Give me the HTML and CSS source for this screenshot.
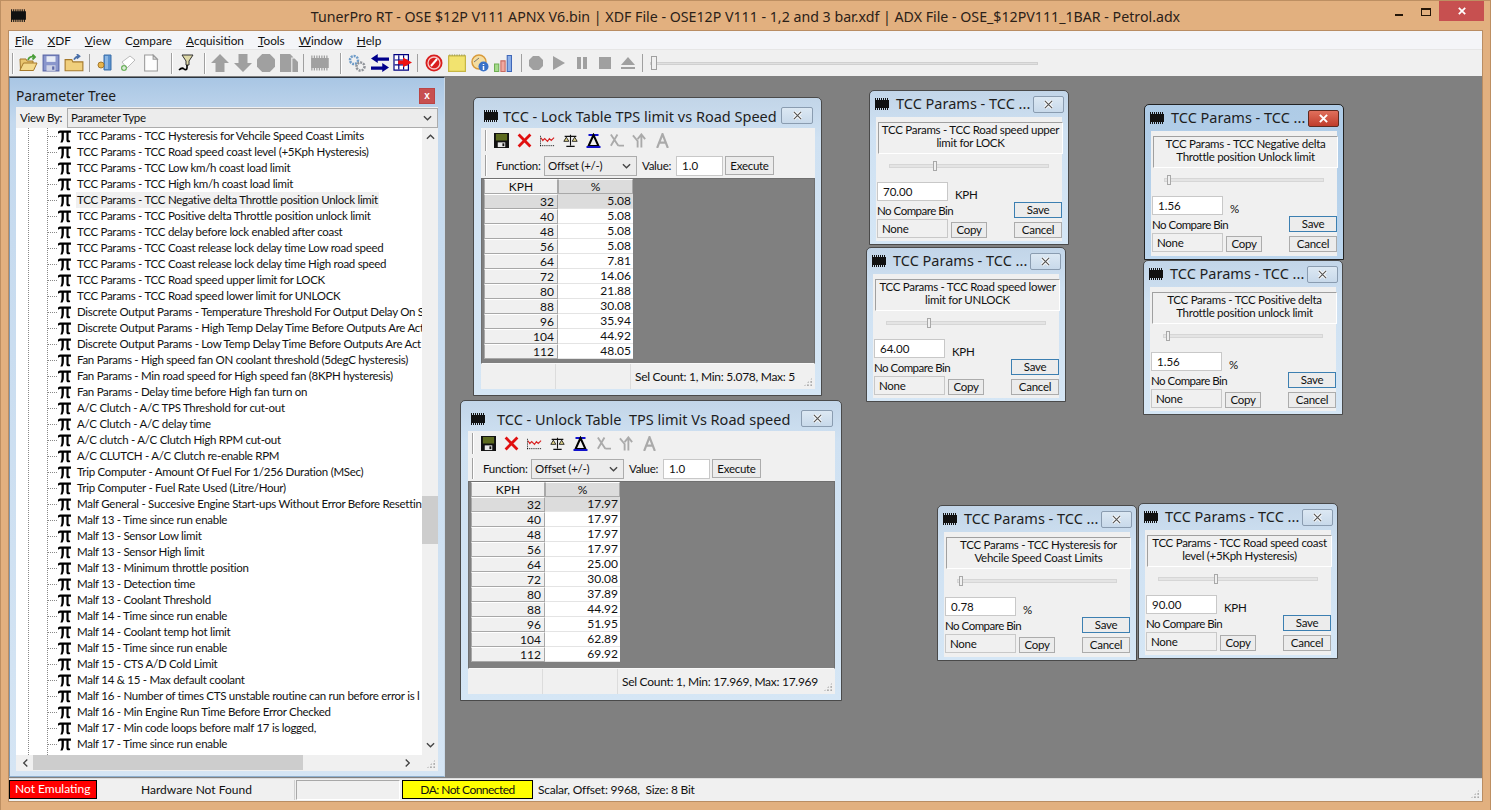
FILE: index.html
```html
<!DOCTYPE html>
<html lang="en">
<head>
<meta charset="utf-8">
<title>TunerPro RT</title>
<link rel="stylesheet" href="styles.css">
</head>
<body>
<svg class="sprite" width="0" height="0" aria-hidden="true">
  <symbol id="chip" viewBox="0 0 16 12"><path fill="#111" d="M1 2h14v8H1z"/><path stroke="#111" stroke-width="1" d="M1.500 0v12M3.500 0v12M5.500 0v12M7.500 0v12M9.500 0v12M11.500 0v12M13.500 0v12"/></symbol>
  <symbol id="chipg" viewBox="0 0 16 12"><path fill="#a0a0a0" d="M1 2h14v8H1z"/><path stroke="#a0a0a0" d="M1.500 0v12M3.500 0v12M5.500 0v12M7.500 0v12M9.500 0v12M11.500 0v12M13.500 0v12"/></symbol>
  <symbol id="pi" viewBox="0 0 14 14"><path fill="#000" d="M0 1.500 2 .5h12v2.400h-2.600v7.400c0 .9.500 1.100 1.600.9v1.600c-1.500.7-3.900.6-3.900-1.600V2.900H6.300v5.300c0 2-.6 4-1.500 5.300H2.500c1-1.500 1.300-3.500 1.300-5.300V2.900H2.500c-.8 0-1.300.4-1.700 1H0z"/></symbol>
  <symbol id="open" viewBox="0 0 20 18"><path fill="#e9c56f" stroke="#a5792b" d="M2 5h6l1 2h6v3H6L2.500 16z"/><path fill="#f4d98c" stroke="#a5792b" d="M5.500 9H19l-3.500 7.500H1.800z"/><path fill="none" stroke="#4b9e3a" stroke-width="1.800" d="M10 6c1-3 3.500-4 6-3M14.500.5 17 3l-2.500 2.500"/></symbol>
  <symbol id="save" viewBox="0 0 16 16"><path fill="#8a96cc" stroke="#5c68a8" d="M1 1h14v14H1z"/><path fill="#e8ecf6" d="M4 2h8v5H4z"/><path fill="#cfd3e6" d="M4 10h8v5H4z"/><path fill="#5c68a8" d="M9 11h2v3H9z"/></symbol>
  <symbol id="saveb" viewBox="0 0 16 16"><path fill="#111" d="M0 0h16v16H0z"/><path fill="#5c6a1e" d="M2 1h12v7H2z"/><path fill="#e8e8e8" d="M4 10h8v5H4z"/><path fill="#111" d="M9 11h2v3H9z"/></symbol>
  <symbol id="folderup" viewBox="0 0 18 16"><path fill="#f0cf7c" stroke="#a5792b" d="M1 5h6l1 2h9v8H1z"/><path fill="none" stroke="#4a6fa8" stroke-width="1.500" d="M9 5c1-2 2.500-3 4-3M11.500 0 14 2l-2.500 2"/></symbol>
  <symbol id="door" viewBox="0 0 18 18"><path fill="#5c93d0" stroke="#3b6ea8" d="M8 1h7v15H8z"/><path fill="#8cb7e4" d="M9 2h3v13H9z"/><circle cx="5" cy="11" r="3" fill="#e8b54c" stroke="#a5792b"/></symbol>
  <symbol id="newfile" viewBox="0 0 18 18"><path fill="#fff" stroke="#bbb" d="m3 8 8-6 5 4-8 8z"/><circle cx="5" cy="14" r="3" fill="#6fb35f"/><path stroke="#fff" d="M3 14h4M5 12v4"/></symbol>
  <symbol id="doc" viewBox="0 0 14 17"><path fill="#fdfdfd" stroke="#9a9a9a" d="M1 1h8l4 4v11H1z"/><path fill="#ddd" stroke="#9a9a9a" d="M9 1v4h4z"/></symbol>
  <symbol id="funnel" viewBox="0 0 18 18"><path fill="#ded9a8" stroke="#333" d="M5 1h11l-4 6v4H9V7z"/><path fill="none" stroke="#000" stroke-width="1.600" d="M10 11v3c0 2-2 2-3 1s-3-1-5 1"/></symbol>
  <symbol id="up" viewBox="0 0 16 16"><path fill="#a0a0a0" d="M8 0l8 8h-4v8H4V8H0z"/></symbol>
  <symbol id="down" viewBox="0 0 16 16"><path fill="#a0a0a0" d="M8 16 0 8h4V0h8v8h4z"/></symbol>
  <symbol id="pages" viewBox="0 0 16 16"><path fill="#a0a0a0" d="M0 0h9l3 3h-2v13H0z"/><path fill="#a0a0a0" d="M11 4h2l3 3v9h-5z"/></symbol>
  <symbol id="gears" viewBox="0 0 18 18"><circle cx="6" cy="6" r="4" fill="none" stroke="#6d9bc8" stroke-width="2.500" stroke-dasharray="2 1"/><circle cx="12.500" cy="12.500" r="4" fill="none" stroke="#8e9298" stroke-width="2.500" stroke-dasharray="2 1"/></symbol>
  <symbol id="swap" viewBox="0 0 16 16"><path fill="#00008c" d="M6 0v3h10v3H6v2L0 4zM10 8v3H0v3h10v2l6-4z"/></symbol>
  <symbol id="flag" viewBox="0 0 16 15"><path fill="#fff" stroke="#000080" d="M.5.500h12v13H.5z"/><path stroke="#000080" d="M4.500 1v12M8.500 1v12M1 5h11M1 9h11"/><path fill="#ee1111" d="M15.500 7 8 3v2.500H4v3h4V11z"/></symbol>
  <symbol id="dial" viewBox="0 0 18 18"><circle cx="9" cy="9" r="8.500" fill="#d81e1e"/><circle cx="9" cy="9" r="6" fill="none" stroke="#f8c8c8" stroke-width="1.300"/><path stroke="#fff" stroke-width="2" d="M6 12l6-7"/></symbol>
  <symbol id="note" viewBox="0 0 15 15"><path fill="#f2e36f" stroke="#c6b644" d="M.5 1.500h14v13H.5z"/><path stroke="#9a9a50" stroke-dasharray="1 1" d="M1 1h13"/></symbol>
  <symbol id="info" viewBox="0 0 18 18"><circle cx="8" cy="8" r="7" fill="#f4dda0" stroke="#d89a3a" stroke-width="1.500"/><path stroke="#777" d="M3 8l5-4"/><circle cx="12.500" cy="12.500" r="5" fill="#3a72c8"/><path stroke="#fff" stroke-width="1.500" d="M12.500 10v1M12.500 12v4"/></symbol>
  <symbol id="bars" viewBox="0 0 17 17"><path fill="#a6dc8c" stroke="#6fae52" d="M.5 9.500h4v7h-4z"/><path fill="#f0a8a0" stroke="#c86a60" d="M6.500 6.500h4v10h-4z"/><path fill="#8cb0e8" stroke="#3f67b8" d="M12.500 1.500h4v15h-4z"/></symbol>
  <symbol id="hex" viewBox="0 0 14 14"><path fill="#a0a0a0" d="M4 0h6l4 4v6l-4 4H4l-4-4V4z"/></symbol>
  <symbol id="play" viewBox="0 0 14 14"><path fill="#a0a0a0" d="M1 0l12 7-12 7z"/></symbol>
  <symbol id="pause" viewBox="0 0 14 14"><path fill="#a0a0a0" d="M2 1h4v12H2zM8 1h4v12H8z"/></symbol>
  <symbol id="stop" viewBox="0 0 14 14"><path fill="#a0a0a0" d="M1 1h12v12H1z"/></symbol>
  <symbol id="eject" viewBox="0 0 14 14"><path fill="#a0a0a0" d="M7 1l7 8H0zM0 11h14v2H0z"/></symbol>
  <symbol id="xred" viewBox="0 0 14 14"><path stroke="#e01010" stroke-width="2.600" d="M1.500 1.500l11 11M12.500 1.500l-11 11"/></symbol>
  <symbol id="wave" viewBox="0 0 16 14"><path fill="none" stroke="#d82020" stroke-width="1.200" d="M1 4l2 3 2-2 3 3 2-3 2 2 3-3"/><path stroke="#000" stroke-dasharray="1 1" d="M0 12.500h16M.5 2v11"/></symbol>
  <symbol id="scale" viewBox="0 0 18 16"><path stroke="#111" stroke-width="1.300" d="M9 1v13M2 3h14M4 15h10"/><path fill="#e6d98a" stroke="#111" d="M4 4 1 9h6zM14 4l-3 5h6z"/></symbol>
  <symbol id="tri" viewBox="0 0 14 15"><path stroke="#1111cc" stroke-width="2" d="M2 2h10"/><path fill="none" stroke="#000" stroke-width="2" d="M7 2 2 13h10z"/><path stroke="#1111cc" stroke-width="2" d="M0 14h14"/></symbol>
  <symbol id="xg" viewBox="0 0 16 15"><path fill="none" stroke="#aaa" stroke-width="2" d="M2 1l8 12M9 1 2 13M10 13h6"/></symbol>
  <symbol id="yg" viewBox="0 0 16 15"><path fill="none" stroke="#aaa" stroke-width="2" d="M1 2l5 6v7M10 15V2M6 6l4-5 4 5"/></symbol>
  <symbol id="ag" viewBox="0 0 12 14"><path fill="none" stroke="#aaa" stroke-width="2" d="M1 14 6 1l5 13M3 9h6"/></symbol>
  <symbol id="xwin" viewBox="0 0 12 10"><path stroke="#fff" stroke-width="3.200" d="M2 1l8 8M10 1 2 9"/><path stroke="#555" stroke-width="1.300" d="M2 1l8 8M10 1 2 9"/></symbol>
  <symbol id="xwhite" viewBox="0 0 12 10"><path stroke="#fff" stroke-width="2.200" d="M2 1l8 8M10 1 2 9"/></symbol>
  <symbol id="chev" viewBox="0 0 10 6"><path fill="none" stroke="#444" stroke-width="1.500" d="M1 1l4 4 4-4"/></symbol>
</svg>

<div class="app">
  <header class="titlebar">
    <svg class="tb-chip"><use href="#chip"/></svg>
    <div class="app-title">TunerPro RT - OSE $12P V111 APNX V6.bin | XDF File - OSE12P V111 - 1,2 and 3 bar.xdf | ADX File - OSE_$12PV111_1BAR - Petrol.adx</div>
    <div class="caps"><span class="cap-min"></span><span class="cap-max"></span><span class="cap-close"><svg class="ic-x"><use href="#xwhite"/></svg></span></div>
  </header>

  <div class="client">
    <nav class="menubar">
      <span><u>F</u>ile</span><span><u>X</u>DF</span><span><u>V</u>iew</span><span>C<u>o</u>mpare</span><span><u>A</u>cquisition</span><span><u>T</u>ools</span><span><u>W</u>indow</span><span><u>H</u>elp</span>
    </nav>

    <div class="toolbar">
      <i class="grip first"></i>
      <svg class="ti"><use href="#open"/></svg><svg class="ti"><use href="#save"/></svg><svg class="ti"><use href="#folderup"/></svg>
      <i class="sep a"></i>
      <svg class="ti"><use href="#door"/></svg><svg class="ti"><use href="#newfile"/></svg><svg class="ti"><use href="#doc"/></svg>
      <i class="grip wide w1"></i>
      <svg class="ti"><use href="#funnel"/></svg>
      <i class="grip"></i>
      <svg class="ti"><use href="#up"/></svg><svg class="ti"><use href="#down"/></svg><svg class="ti"><use href="#hex"/></svg><svg class="ti"><use href="#pages"/></svg>
      <i class="sep"></i>
      <svg class="ti"><use href="#chipg"/></svg>
      <i class="grip wide"></i>
      <svg class="ti"><use href="#gears"/></svg><svg class="ti"><use href="#swap"/></svg><svg class="ti"><use href="#flag"/></svg>
      <i class="sep"></i>
      <svg class="ti"><use href="#dial"/></svg><svg class="ti"><use href="#note"/></svg><svg class="ti"><use href="#info"/></svg><svg class="ti"><use href="#bars"/></svg>
      <i class="sep b"></i>
      <svg class="ti sm"><use href="#hex"/></svg><svg class="ti sm"><use href="#play"/></svg><svg class="ti sm"><use href="#pause"/></svg><svg class="ti sm"><use href="#stop"/></svg><svg class="ti sm"><use href="#eject"/></svg>
      <i class="sep"></i>
      <div class="tslider"><i></i></div>
    </div>

    <main class="mdi">
      <aside class="tree-panel">
        <div class="tree-head"><span>Parameter Tree</span><b class="tree-close">x</b></div>
        <div class="viewby"><label>View By:</label><div class="combo">Parameter Type<svg class="chev"><use href="#chev"/></svg></div></div>
        <div class="tree-body">
          <div class="tree-scroll">
            <ul class="tree">
              <li><svg><use href="#pi"/></svg><span>TCC Params - TCC Hysteresis for Vehcile Speed Coast Limits</span></li>
              <li><svg><use href="#pi"/></svg><span>TCC Params - TCC Road speed coast level (+5Kph Hysteresis)</span></li>
              <li><svg><use href="#pi"/></svg><span>TCC Params - TCC Low km/h coast load limit</span></li>
              <li><svg><use href="#pi"/></svg><span>TCC Params - TCC High km/h coast load limit</span></li>
              <li class="sel"><svg><use href="#pi"/></svg><span>TCC Params - TCC Negative delta Throttle position Unlock limit</span></li>
              <li><svg><use href="#pi"/></svg><span>TCC Params - TCC Positive delta Throttle position unlock limit</span></li>
              <li><svg><use href="#pi"/></svg><span>TCC Params - TCC delay before lock enabled after coast</span></li>
              <li><svg><use href="#pi"/></svg><span>TCC Params - TCC Coast release lock delay time Low road speed</span></li>
              <li><svg><use href="#pi"/></svg><span>TCC Params - TCC Coast release lock delay time High road speed</span></li>
              <li><svg><use href="#pi"/></svg><span>TCC Params - TCC Road speed upper limit for LOCK</span></li>
              <li><svg><use href="#pi"/></svg><span>TCC Params - TCC Road speed lower limit for UNLOCK</span></li>
              <li><svg><use href="#pi"/></svg><span>Discrete Output Params - Temperature Threshold For Output Delay On S</span></li>
              <li><svg><use href="#pi"/></svg><span>Discrete Output Params - High Temp Delay Time Before Outputs Are Act</span></li>
              <li><svg><use href="#pi"/></svg><span>Discrete Output Params - Low Temp Delay Time Before Outputs Are Act</span></li>
              <li><svg><use href="#pi"/></svg><span>Fan Params - High speed fan ON coolant threshold (5degC hysteresis)</span></li>
              <li><svg><use href="#pi"/></svg><span>Fan Params - Min road speed for High speed fan (8KPH hysteresis)</span></li>
              <li><svg><use href="#pi"/></svg><span>Fan Params - Delay time before High fan turn on</span></li>
              <li><svg><use href="#pi"/></svg><span>A/C Clutch - A/C TPS Threshold for cut-out</span></li>
              <li><svg><use href="#pi"/></svg><span>A/C Clutch - A/C delay time</span></li>
              <li><svg><use href="#pi"/></svg><span>A/C clutch - A/C Clutch High RPM cut-out</span></li>
              <li><svg><use href="#pi"/></svg><span>A/C CLUTCH - A/C Clutch re-enable RPM</span></li>
              <li><svg><use href="#pi"/></svg><span>Trip Computer - Amount Of Fuel For 1/256 Duration (MSec)</span></li>
              <li><svg><use href="#pi"/></svg><span>Trip Computer - Fuel Rate Used (Litre/Hour)</span></li>
              <li><svg><use href="#pi"/></svg><span>Malf General - Succesive Engine Start-ups Without Error Before Resettin</span></li>
              <li><svg><use href="#pi"/></svg><span>Malf 13 - Time since run enable</span></li>
              <li><svg><use href="#pi"/></svg><span>Malf 13 - Sensor Low limit</span></li>
              <li><svg><use href="#pi"/></svg><span>Malf 13 - Sensor High limit</span></li>
              <li><svg><use href="#pi"/></svg><span>Malf 13 - Minimum throttle position</span></li>
              <li><svg><use href="#pi"/></svg><span>Malf 13 - Detection time</span></li>
              <li><svg><use href="#pi"/></svg><span>Malf 13 - Coolant Threshold</span></li>
              <li><svg><use href="#pi"/></svg><span>Malf 14 - Time since run enable</span></li>
              <li><svg><use href="#pi"/></svg><span>Malf 14 - Coolant temp hot limit</span></li>
              <li><svg><use href="#pi"/></svg><span>Malf 15 - Time since run enable</span></li>
              <li><svg><use href="#pi"/></svg><span>Malf 15 - CTS A/D Cold Limit</span></li>
              <li><svg><use href="#pi"/></svg><span>Malf 14 &amp; 15 - Max default coolant</span></li>
              <li><svg><use href="#pi"/></svg><span>Malf 16 - Number of times CTS unstable routine can run before error is l</span></li>
              <li><svg><use href="#pi"/></svg><span>Malf 16 - Min Engine Run Time Before Error Checked</span></li>
              <li><svg><use href="#pi"/></svg><span>Malf 17 - Min code loops before malf 17 is logged,</span></li>
              <li><svg><use href="#pi"/></svg><span>Malf 17 - Time since run enable</span></li>
            </ul>
            <div class="vscroll"><svg class="chev up"><use href="#chev"/></svg><i></i><svg class="chev"><use href="#chev"/></svg></div>
          </div>
          <div class="hscroll"><svg class="chev left"><use href="#chev"/></svg><i></i><svg class="chev right"><use href="#chev"/></svg><em class="gripper"></em></div>
        </div>
      </aside>

      <!-- Table windows -->
      <section class="win tablewin w-lock">
        <div class="wt"><svg class="wchip"><use href="#chip"/></svg><h2>TCC - Lock Table TPS limit vs Road Speed</h2><button class="wx"><svg><use href="#xwin"/></svg></button></div>
        <div class="wb">
          <div class="tt1"><i class="grip"></i><svg><use href="#saveb"/></svg><svg><use href="#xred"/></svg><svg><use href="#wave"/></svg><svg><use href="#scale"/></svg><svg><use href="#tri"/></svg><svg><use href="#xg"/></svg><svg><use href="#yg"/></svg><svg><use href="#ag"/></svg></div>
          <div class="tt2"><i class="grip"></i><span class="fl">Function:</span><div class="combo fn">Offset (+/-)<svg class="chev"><use href="#chev"/></svg></div><span class="vl">Value:</span><div class="val">1.0</div><div class="btn ex">Execute</div></div>
          <div class="gridarea">
            <div class="tbl">
              <div class="th">KPH</div><div class="th on">%</div>
              <div class="rh on">32</div><div class="td on">5.08</div>
              <div class="rh">40</div><div class="td">5.08</div>
              <div class="rh">48</div><div class="td">5.08</div>
              <div class="rh">56</div><div class="td">5.08</div>
              <div class="rh">64</div><div class="td">7.81</div>
              <div class="rh">72</div><div class="td">14.06</div>
              <div class="rh">80</div><div class="td">21.88</div>
              <div class="rh">88</div><div class="td">30.08</div>
              <div class="rh">96</div><div class="td">35.94</div>
              <div class="rh">104</div><div class="td">44.92</div>
              <div class="rh">112</div><div class="td">48.05</div>
            </div>
          </div>
          <div class="wstat"><span class="c1"></span><span class="c2"></span><span class="c3">Sel Count: 1, Min: 5.078, Max: 5</span><em class="gripper"></em></div>
        </div>
      </section>

      <section class="win tablewin w-unlock">
        <div class="wt"><svg class="wchip"><use href="#chip"/></svg><h2>TCC - Unlock Table&nbsp; TPS limit Vs Road speed</h2><button class="wx"><svg><use href="#xwin"/></svg></button></div>
        <div class="wb">
          <div class="tt1"><i class="grip"></i><svg><use href="#saveb"/></svg><svg><use href="#xred"/></svg><svg><use href="#wave"/></svg><svg><use href="#scale"/></svg><svg><use href="#tri"/></svg><svg><use href="#xg"/></svg><svg><use href="#yg"/></svg><svg><use href="#ag"/></svg></div>
          <div class="tt2"><i class="grip"></i><span class="fl">Function:</span><div class="combo fn">Offset (+/-)<svg class="chev"><use href="#chev"/></svg></div><span class="vl">Value:</span><div class="val">1.0</div><div class="btn ex">Execute</div></div>
          <div class="gridarea">
            <div class="tbl">
              <div class="th">KPH</div><div class="th on">%</div>
              <div class="rh on">32</div><div class="td on">17.97</div>
              <div class="rh">40</div><div class="td">17.97</div>
              <div class="rh">48</div><div class="td">17.97</div>
              <div class="rh">56</div><div class="td">17.97</div>
              <div class="rh">64</div><div class="td">25.00</div>
              <div class="rh">72</div><div class="td">30.08</div>
              <div class="rh">80</div><div class="td">37.89</div>
              <div class="rh">88</div><div class="td">44.92</div>
              <div class="rh">96</div><div class="td">51.95</div>
              <div class="rh">104</div><div class="td">62.89</div>
              <div class="rh">112</div><div class="td">69.92</div>
            </div>
          </div>
          <div class="wstat"><span class="c1"></span><span class="c2"></span><span class="c3">Sel Count: 1, Min: 17.969, Max: 17.969</span><em class="gripper"></em></div>
        </div>
      </section>

      <!-- Scalar dialogs -->
      <section class="win dlg d1">
        <div class="wt"><svg class="wchip"><use href="#chip"/></svg><h2>TCC Params - TCC ...</h2><button class="wx"><svg><use href="#xwin"/></svg></button></div>
        <div class="db">
          <div class="lbl">TCC Params - TCC Road speed upper limit for LOCK</div>
          <div class="sl"><i style="left:43px"></i></div>
          <div class="form"><div class="val big">70.00</div><span class="unit">KPH</span><span class="ncb">No Compare Bin</span><div class="btn save">Save</div><div class="none">None</div><div class="btn copy">Copy</div><div class="btn cancel">Cancel</div></div>
        </div>
      </section>

      <section class="win dlg d2">
        <div class="wt"><svg class="wchip"><use href="#chip"/></svg><h2>TCC Params - TCC ...</h2><button class="wx"><svg><use href="#xwin"/></svg></button></div>
        <div class="db">
          <div class="lbl">TCC Params - TCC Road speed lower limit for UNLOCK</div>
          <div class="sl"><i style="left:40px"></i></div>
          <div class="form"><div class="val big">64.00</div><span class="unit">KPH</span><span class="ncb">No Compare Bin</span><div class="btn save">Save</div><div class="none">None</div><div class="btn copy">Copy</div><div class="btn cancel">Cancel</div></div>
        </div>
      </section>

      <section class="win dlg d3 active">
        <div class="wt"><svg class="wchip"><use href="#chip"/></svg><h2>TCC Params - TCC ...</h2><button class="wx hot"><svg><use href="#xwhite"/></svg></button></div>
        <div class="db">
          <div class="lbl">TCC Params - TCC Negative delta Throttle position Unlock limit</div>
          <div class="sl"><i style="left:2px"></i></div>
          <div class="form"><div class="val big">1.56</div><span class="unit">%</span><span class="ncb">No Compare Bin</span><div class="btn save">Save</div><div class="none">None</div><div class="btn copy">Copy</div><div class="btn cancel">Cancel</div></div>
        </div>
      </section>

      <section class="win dlg d4">
        <div class="wt"><svg class="wchip"><use href="#chip"/></svg><h2>TCC Params - TCC ...</h2><button class="wx"><svg><use href="#xwin"/></svg></button></div>
        <div class="db">
          <div class="lbl">TCC Params - TCC Positive delta Throttle position unlock limit</div>
          <div class="sl"><i style="left:2px"></i></div>
          <div class="form"><div class="val big">1.56</div><span class="unit">%</span><span class="ncb">No Compare Bin</span><div class="btn save">Save</div><div class="none">None</div><div class="btn copy">Copy</div><div class="btn cancel">Cancel</div></div>
        </div>
      </section>

      <section class="win dlg d5">
        <div class="wt"><svg class="wchip"><use href="#chip"/></svg><h2>TCC Params - TCC ...</h2><button class="wx"><svg><use href="#xwin"/></svg></button></div>
        <div class="db">
          <div class="lbl">TCC Params - TCC Hysteresis for Vehcile Speed Coast Limits</div>
          <div class="sl"><i style="left:1px"></i></div>
          <div class="form"><div class="val big">0.78</div><span class="unit">%</span><span class="ncb">No Compare Bin</span><div class="btn save">Save</div><div class="none">None</div><div class="btn copy">Copy</div><div class="btn cancel">Cancel</div></div>
        </div>
      </section>

      <section class="win dlg d6">
        <div class="wt"><svg class="wchip"><use href="#chip"/></svg><h2>TCC Params - TCC ...</h2><button class="wx"><svg><use href="#xwin"/></svg></button></div>
        <div class="db">
          <div class="lbl">TCC Params - TCC Road speed coast level (+5Kph Hysteresis)</div>
          <div class="sl"><i style="left:55px"></i></div>
          <div class="form"><div class="val big">90.00</div><span class="unit">KPH</span><span class="ncb">No Compare Bin</span><div class="btn save">Save</div><div class="none">None</div><div class="btn copy">Copy</div><div class="btn cancel">Cancel</div></div>
        </div>
      </section>
    </main>

    <footer class="status">
      <div class="st-red">Not Emulating</div>
      <div class="st-hw">Hardware Not Found</div>
      <div class="st-box"></div>
      <div class="st-yel">DA: Not Connected</div>
      <div class="st-info">Scalar, Offset: 9968,&nbsp; Size: 8 Bit</div>
      <em class="gripper"></em>
    </footer>
  </div>
</div>
</body>
</html>
```

FILE: styles.css
```css
* { box-sizing: border-box; }
html, body { margin: 0; height: 100%; overflow: hidden; }
body { font-family: Lato, "Liberation Sans", sans-serif; font-size: 11.5px; letter-spacing: -.28px; color: #111; background: #e2b07f; }
.sprite { position: absolute; }
svg { display: block; }
em, i { font-style: normal; display: block; }

.app { width: 1491px; height: 810px; display: flex; flex-direction: column; background: #e2b07f; border: 1px solid #bd8f62; border-bottom: 0; }
.titlebar { height: 29px; flex: none; display: flex; align-items: center; position: relative; padding-left: 9px; }
.tb-chip { width: 17px; height: 13px; }
.app-title { position: absolute; left: 0; right: 0; top: 6px; text-align: center; font-family: "Noto Sans", sans-serif; font-size: 14.2px; letter-spacing: 0; color: #2b2118; white-space: nowrap; }
.caps { position: absolute; right: 6px; top: 0; display: flex; align-items: flex-start; }
.cap-min { width: 8px; height: 2px; background: #241608; margin: 13px 0 0; }
.cap-max { width: 10px; height: 8px; border: 1px solid #241608; border-top-width: 2px; margin: 7px 0 0 18px; }
.cap-close { width: 45px; height: 20px; background: #c75050; margin-left: 8px; display: flex; align-items: center; justify-content: center; }
.ic-x { width: 10px; height: 8px; }

.client { flex: 1; margin: 0 7px 8px 7px; display: flex; flex-direction: column; border: 1px solid #b98d63; min-height: 0; background: #f0f0f0; }
.menubar { height: 19px; flex: none; display: flex; gap: 14px; align-items: center; padding-left: 6px; background: #f4f5f8; border-bottom: 1px solid #e6e6e6; font-size: 11.8px; letter-spacing: 0; }
.menubar u { text-decoration-thickness: 1px; }

.toolbar { height: 26px; flex: none; display: flex; align-items: center; padding-left: 3px; background: #f0f0f0; }
.ti { width: 20px; height: 18px; margin: 0 1.5px; flex: none; }
.ti.sm { width: 14px; height: 14px; margin: 0 4.5px; }
.grip { width: 2px; height: 21px; border-left: 1px solid #a0a0a0; border-right: 1px solid #fff; flex: none; }
.toolbar .grip { margin: 0 2.5px 0 6.5px; }
.toolbar .grip.first { margin-left: 0; }
.toolbar .grip.wide { margin: 0 3.5px 0 8.5px; }
.toolbar .grip.wide.w1 { margin-right: 1.5px; }
.sep { width: 1px; height: 18px; background: #a0a0a0; margin: 0 4.5px 0 2.5px; flex: none; }
.sep.a { margin: 0 3.5px; }
.sep.b { margin: 0 2.5px 0 6.5px; }
.tslider { width: 388px; height: 3px; background: #e0e0e0; border: 1px solid #d0d0d0; position: relative; margin-left: 2.5px; }
.tslider i { position: absolute; left: 0; top: -7px; width: 6px; height: 14px; background: #f0f0f0; border: 1px solid #a0a0a0; }

.mdi { flex: 1; min-height: 0; background: #808080; position: relative; padding: 1px 0; display: flex; }

/* Parameter tree */
.tree-panel { width: 436px; display: flex; flex-direction: column; background: linear-gradient(#a9c6e4 0, #c4d9ee 45px, #d5e5f4 100%); border: 1px solid; border-color: #2a3440 #c9d9e8 #8fb0cf #7f98b0; padding: 0 6px 7px 6px; }
.tree-head { height: 29px; flex: none; display: flex; align-items: center; justify-content: space-between; font-family: "Noto Sans", sans-serif; font-size: 13.8px; letter-spacing: 0; color: #1c1c1c; padding: 5px 3px 0 0; }
.tree-close { width: 16px; height: 16px; background: #c75050; color: #fff; font: bold 10px/14px "Liberation Sans", sans-serif; text-align: center; border: 1px solid #b44; margin-top: 2px; }
.viewby { height: 21px; flex: none; display: flex; align-items: center; background: #f0f0f0; }
.viewby label { width: 51px; padding-left: 4px; }
.combo { background: #ececec; border: 1px solid #acacac; display: flex; align-items: center; justify-content: space-between; padding: 0 5px 0 3px; }
.viewby .combo { flex: 1; height: 20px; }
.chev { width: 9px; height: 6px; flex: none; }
.tree-body { flex: 1; min-height: 0; display: flex; flex-direction: column; background: #f0f0f0; }
.tree-scroll { flex: none; height: 627px; display: flex; }
.tree { list-style: none; margin: 0; padding: 0; flex: 1; min-width: 0; overflow: hidden; background-color: #fff; background-image: repeating-linear-gradient(#888 0 1px, transparent 1px 2px), repeating-linear-gradient(#888 0 1px, transparent 1px 2px); background-size: 1px 100%, 1px 100%; background-position: 12px 0, 31px 0; background-repeat: no-repeat; }
.tree li { height: 16px; display: flex; align-items: center; white-space: nowrap; padding-left: 42px; position: relative; }
.tree li::before { content: ""; position: absolute; left: 32px; top: 8px; width: 9px; border-top: 1px dotted #888; }
.tree li svg { width: 13px; height: 13px; flex: none; margin-right: 5px; }
.tree li span { padding: 1px; line-height: 14px; }
.tree li.sel span { background: #f0f0f0; }
.vscroll { width: 16px; flex: none; background: #f0f0f0; display: flex; flex-direction: column; align-items: center; position: relative; justify-content: space-between; padding: 6px 0 7px; }
.vscroll i { position: absolute; left: 0; top: 368px; width: 16px; height: 48px; background: #cdcdcd; }
.chev.up { transform: rotate(180deg); }
.hscroll { height: 16px; flex: none; position: relative; display: flex; align-items: center; justify-content: space-between; padding: 0 26px 0 5px; background: #f0f0f0; }
.hscroll i { position: absolute; left: 17px; top: 0; width: 270px; height: 15px; background: #cdcdcd; }
.chev.left { transform: rotate(90deg); }
.chev.right { transform: rotate(-90deg); }
.gripper { position: absolute; right: 2px; bottom: 2px; width: 10px; height: 10px; background-image: radial-gradient(#aaa 1px, transparent 1.2px); background-size: 3.3px 3.3px; clip-path: polygon(100% 0, 100% 100%, 0 100%); }

/* Floating windows */
.win { position: absolute; border: 1px solid #4a4a4a; border-radius: 5px 5px 0 0; background: linear-gradient(#c2d5e8, #cfe1f2 40px, #d5e6f5); display: flex; flex-direction: column; }
.wt { height: 26px; flex: none; display: flex; align-items: center; padding-left: 4px; }
.wchip { width: 16px; height: 12px; flex: none; }
.wt h2 { margin: -3px 0 0; font: 400 14.5px "Noto Sans", sans-serif; letter-spacing: 0; color: #1e1e1e; white-space: nowrap; overflow: hidden; flex: 1; padding-left: 6px; }
.wx { width: 31px; height: 17px; flex: none; padding: 0; margin-right: 4px; border: 1px solid #8a9cb0; border-radius: 2px; background: linear-gradient(#dce8f3, #c8d9ea); display: flex; align-items: center; justify-content: center; }
.wx svg { width: 11px; height: 9px; }
.wx.hot { background: linear-gradient(#e0705c, #c03d2c); border-color: #5e2a20; }
.wb, .db { flex: 1; background: #f0f0f0; min-height: 0; display: flex; flex-direction: column; }
.wb { margin: 0 6px 6px 7px; }
.db { margin: 0 6px 3px 6px; padding: 5px 0 0 1px; }

/* Table window */
.tablewin .wt { height: 30px; padding: 5px 0 0 9px; }
.tablewin h2 { margin-top: 0; padding-left: 4px; }
.w-unlock h2 { padding-left: 11px; }
.tablewin .wx { width: 32px; margin-right: 8px; }
.w-lock { left: 464px; top: 21px; width: 349px; height: 299px; }
.w-unlock { left: 451px; top: 324px; width: 382px; height: 301px; }
.tt1 { height: 25px; flex: none; display: flex; align-items: center; gap: 8px; padding-left: 4px; }
.tt1 svg { width: 15px; height: 15px; flex: none; }
.tt1 .grip { margin-right: -1px; }
.tt2 { height: 25px; flex: none; display: flex; align-items: center; padding-left: 4px; }
.tt2 .grip { margin-right: 9px; }
.fl { width: 48px; flex: none; }
.combo.fn { width: 93px; height: 20px; flex: none; }
.vl { margin-left: 5px; width: 34px; flex: none; }
.val { background: #fff; border: 1px solid #c8c8c8; height: 20px; width: 47px; padding: 0 5px; line-height: 18px; flex: none; letter-spacing: 0; }
.btn { border: 1px solid #acacac; background: #ececec; text-align: center; }
.btn.ex { width: 49px; height: 19px; line-height: 17px; margin-left: 2px; flex: none; }
.gridarea { flex: 1; min-height: 0; background: #808080; border: 1px solid #707070; border-bottom-color: #f8f8f8; padding: 0 2px; }
.tbl { display: grid; grid-template-columns: 74px 75px; grid-template-rows: repeat(12, 15px); width: 149px; background: #fff; font-size: 12px; letter-spacing: 0; }
.th, .rh { background: #f0f0f0; border: 1px solid #a8a8a8; border-top-color: #fff; line-height: 14px; }
.th { text-align: center; }
.rh { text-align: right; padding-right: 3px; }
.td { background: #fff; text-align: right; padding-right: 2px; line-height: 14px; border-bottom: 1px solid #e4e4e4; }
.th.on, .rh.on, .td.on { background: #dcdcdc; }
.wstat { height: 25px; flex: none; display: flex; align-items: center; position: relative; font-size: 12px; }
.wstat .c1, .wstat .c2 { width: 75px; height: 100%; border-right: 1px solid #dcdcdc; }
.wstat .c3 { padding-left: 4px; }

/* Scalar dialogs */
.dlg { width: 200px; height: 155px; }
.d1 { left: 860px; top: 14px; }
.d2 { left: 857px; top: 171px; }
.d3 { left: 1135px; top: 28px; height: 156px; background: linear-gradient(#aecbe6, #bcd6ee); border-color: #222; }
.d4 { left: 1134px; top: 184px; }
.d5 { left: 928px; top: 429px; height: 156px; }
.d6 { left: 1129px; top: 427px; height: 156px; }
.lbl { height: 32px; flex: none; margin: 0 -1px 0 1px; border: 1px solid #a0a0a0; border-right-color: #fff; border-bottom-color: #fff; text-align: center; line-height: 13px; padding: 0 2px; }
.sl { height: 4px; flex: none; margin: 10px 13px 0 12px; background: #e4e4e4; border: 1px solid #d6d6d6; position: relative; }
.sl i { position: absolute; top: -4px; width: 4px; height: 10px; background: #f0f0f0; border: 1px solid #a8a8a8; }
.form { margin-top: 14px; display: grid; grid-template-columns: 71px 40px 1fr 48px; grid-template-rows: 19px 18px 19px; align-items: center; }
.val.big { width: 71px; height: 19px; padding-left: 5px; grid-column: 1; grid-row: 1; line-height: 17px; }
.unit { grid-column: 2 / 4; grid-row: 1; padding: 6px 0 0 7px; }
.ncb { grid-column: 1 / 3; grid-row: 2; white-space: nowrap; padding-top: 1px; letter-spacing: -.5px; }
.btn.save { grid-column: 4; grid-row: 2; height: 16px; line-height: 14px; border-color: #3c7fb1; }
.none { grid-column: 1; grid-row: 3; height: 19px; border: 1px solid #c8c8c8; padding-left: 4px; line-height: 17px; }
.btn.copy { grid-column: 2; grid-row: 3; height: 16px; line-height: 14px; width: 36px; margin: 3px 0 0 3px; }
.btn.cancel { grid-column: 4; grid-row: 3; height: 16px; line-height: 14px; margin-top: 3px; }

/* Status bar */
.status { height: 23px; flex: none; display: flex; align-items: center; background: #f0f0f0; border-top: 1px solid #dcdcdc; position: relative; padding-bottom: 1px; font-size: 12px; letter-spacing: 0; }
.st-red { width: 88px; height: 19px; background: #ff0000; color: #fff; border: 1px solid #000; padding-left: 5px; line-height: 16px; }
.st-hw { width: 198px; padding-left: 44px; border-right: 1px solid #d0d0d0; line-height: 20px; }
.st-box { width: 104px; height: 20px; border: 1px solid #a8a8a8; border-right-color: #fff; border-bottom-color: #fff; margin-left: 1px; }
.st-yel { width: 131px; height: 19px; background: #ffff00; border: 1px solid #000; text-align: center; line-height: 17px; margin-left: 2px; letter-spacing: -.55px; }
.st-info { padding-left: 5px; letter-spacing: -.25px; }
```
